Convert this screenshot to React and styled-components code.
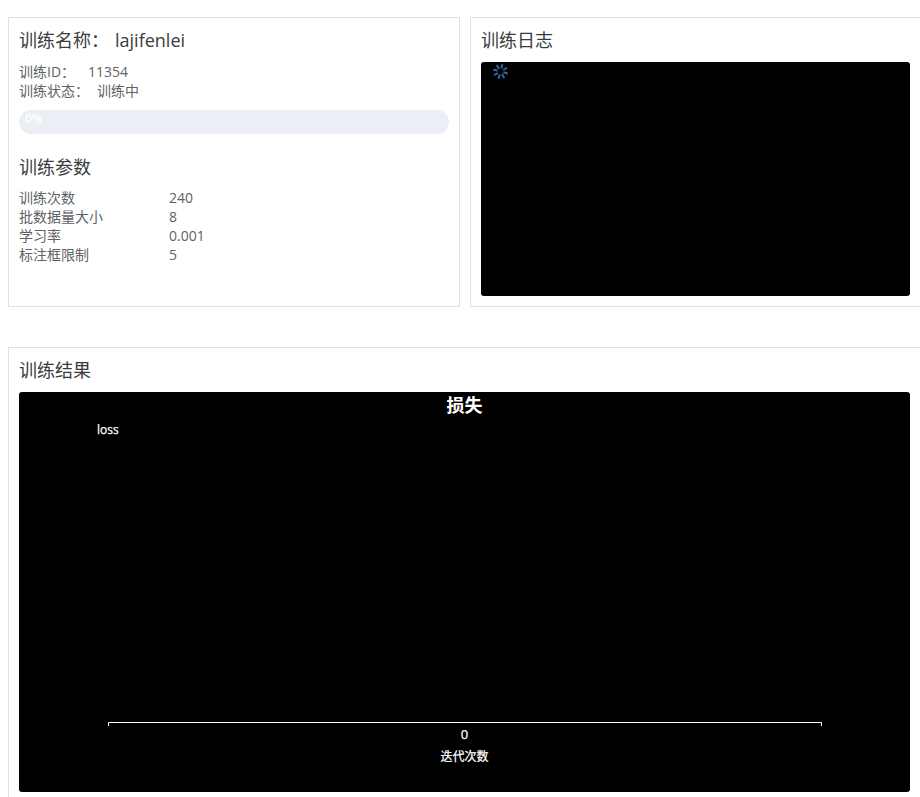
import React from "react";
import styled, { createGlobalStyle } from "styled-components";

const GlobalStyle = createGlobalStyle`
  html, body {
    margin: 0;
    padding: 0;
    background: #fff;
    overflow: hidden;
    height: 797px;
  }
  body {
    font-family: "Open Sans", "Noto Sans CJK SC", sans-serif;
    color: #606266;
  }
`;

const Page = styled.div`
  width: 921px;
  padding: 17px 0 0 8px;
  box-sizing: border-box;
`;

const TopRow = styled.div`
  display: grid;
  grid-template-columns: 452px 451px;
  column-gap: 10px;
  margin-bottom: 40px;
`;

const Card = styled.section`
  border: 1px solid #e2e2e2;
  box-sizing: border-box;
  height: ${(p) => p.$height}px;
  padding: 10px;
  overflow: hidden;
`;

const Title = styled.h3`
  margin: 0 0 ${(p) => p.$gap || 0}px;
  font-size: 18px;
  line-height: 25px;
  font-weight: 400;
  color: #3a3c40;
  padding-top: ${(p) => p.$top || 0}px;
`;

const TitleValue = styled.span`
  margin-left: 6px;
`;

const InfoLine = styled.div`
  font-size: 14px;
  line-height: 19px;
  color: #606266;
  display: flex;
`;

const InfoLabel = styled.span`
  margin-right: ${(p) => p.$gap}px;
`;

const Progress = styled.div`
  height: 24px;
  margin: 10px 0 0;
  border-radius: 12px;
  background: #ebeef5;
  color: #fff;
  font-size: 12px;
  line-height: 18px;
  font-weight: 600;
  padding-left: 6px;
`;

const ParamGrid = styled.div`
  display: grid;
  grid-template-columns: 150px 1fr;
  font-size: 14px;
  line-height: 19px;
  margin-top: 8px;
`;

const BlackBox = styled.div`
  background: #000;
  border-radius: 3px;
  height: ${(p) => p.$height}px;
  position: relative;
  margin-top: ${(p) => p.$top || 0}px;
`;

const Spinner = styled.svg`
  position: absolute;
  left: 11px;
  top: 1px;
  width: 17px;
  height: 17px;
`;

const Chart = styled.svg`
  display: block;
  width: 891px;
  height: 400px;
`;

const params = [
  ["训练次数", "240"],
  ["批数据量大小", "8"],
  ["学习率", "0.001"],
  ["标注框限制", "5"],
];

const spokes = [0, 45, 90, 135, 180, 225, 270, 315];

export default function App() {
  return (
    <>
      <GlobalStyle />
      <Page>
        <TopRow>
          <Card $height={290}>
            <Title $gap={9}>
              训练名称：<TitleValue>lajifenlei</TitleValue>
            </Title>
            <InfoLine>
              <InfoLabel $gap={13}>训练ID：</InfoLabel>
              <span>11354</span>
            </InfoLine>
            <InfoLine>
              <InfoLabel $gap={8}>训练状态：</InfoLabel>
              <span>训练中</span>
            </InfoLine>
            <Progress>0%</Progress>
            <Title $top={21}>训练参数</Title>
            <ParamGrid>
              {params.map(([label, value]) => (
                <React.Fragment key={label}>
                  <span>{label}</span>
                  <span>{value}</span>
                </React.Fragment>
              ))}
            </ParamGrid>
          </Card>
          <Card $height={290}>
            <Title>训练日志</Title>
            <BlackBox $height={234} $top={9}>
              <Spinner viewBox="0 0 17 17">
                {spokes.map((a) => (
                  <line
                    key={a}
                    x1="8.5"
                    y1="1"
                    x2="8.5"
                    y2="5.5"
                    stroke="#3468a3"
                    strokeWidth="2"
                    transform={`rotate(${a + 15} 8.5 8.5)`}
                  />
                ))}
              </Spinner>
            </BlackBox>
          </Card>
        </TopRow>
        <Card $height={470}>
          <Title>训练结果</Title>
          <BlackBox $height={400} $top={9}>
            <Chart viewBox="0 0 891 400">
              <text x="445.5" y="20" textAnchor="middle" fill="#fff" fontSize="18" fontWeight="700">损失</text>
              <text x="78" y="42" fill="#fff" stroke="#fff" strokeWidth="0.25" fontSize="12">loss</text>
              <path d="M89.5 334V330.5H802.5V334" fill="none" stroke="#fff" strokeWidth="1" />
              <text x="445.5" y="347" textAnchor="middle" fill="#fff" stroke="#fff" strokeWidth="0.25" fontSize="13">0</text>
              <text x="445.5" y="369" textAnchor="middle" fill="#fff" stroke="#fff" strokeWidth="0.25" fontSize="12">迭代次数</text>
            </Chart>
          </BlackBox>
        </Card>
      </Page>
    </>
  );
}
